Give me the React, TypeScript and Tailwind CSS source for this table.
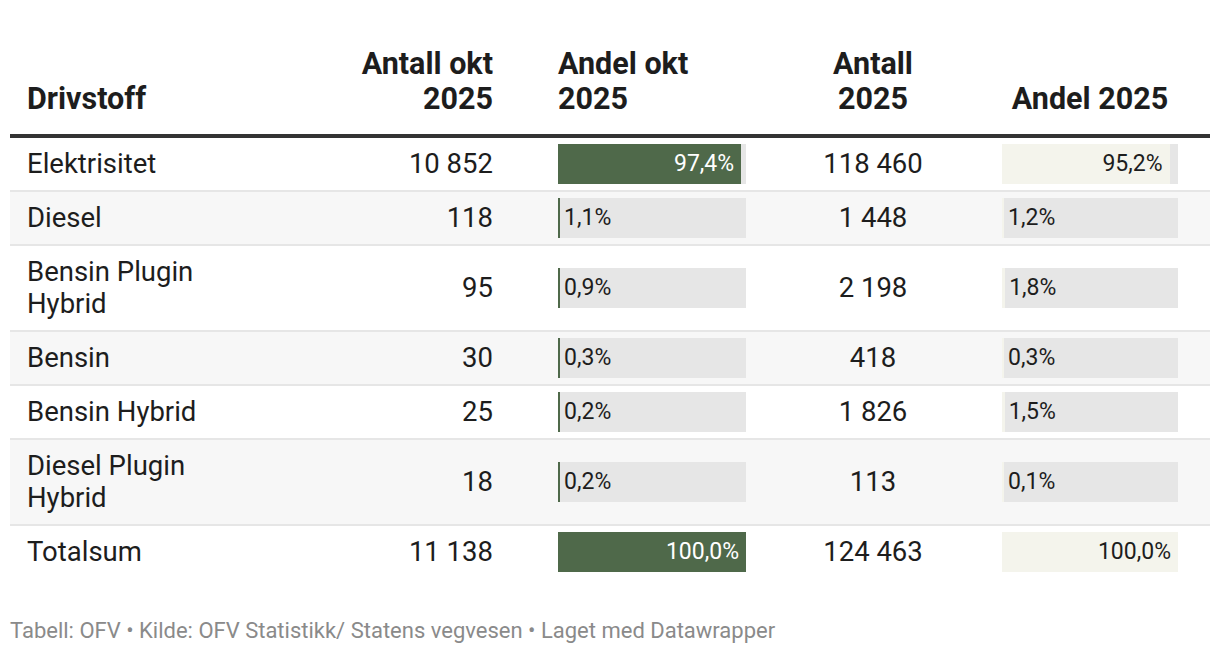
import React from 'react';

type Row = {
  name: string;
  okt: string;
  andelOkt: number;
  antall: string;
  andel: number;
};

const rows: Row[] = [
  { name: 'Elektrisitet', okt: '10 852', andelOkt: 97.4, antall: '118 460', andel: 95.2 },
  { name: 'Diesel', okt: '118', andelOkt: 1.1, antall: '1 448', andel: 1.2 },
  { name: 'Bensin Plugin Hybrid', okt: '95', andelOkt: 0.9, antall: '2 198', andel: 1.8 },
  { name: 'Bensin', okt: '30', andelOkt: 0.3, antall: '418', andel: 0.3 },
  { name: 'Bensin Hybrid', okt: '25', andelOkt: 0.2, antall: '1 826', andel: 1.5 },
  { name: 'Diesel Plugin Hybrid', okt: '18', andelOkt: 0.2, antall: '113', andel: 0.1 },
  { name: 'Totalsum', okt: '11 138', andelOkt: 100, antall: '124 463', andel: 100 },
];

const fmt = (v: number) => v.toFixed(1).replace('.', ',') + '%';

function Bar({ value, width, fill, light }: { value: number; width: number; fill: string; light: boolean }) {
  const px = Math.max(2, (value / 100) * width);
  const inside = value > 50;
  return (
    <div className="flex h-[40px] items-center bg-[#e6e6e6]" style={{ width }}>
      {inside ? (
        <div
          className={`flex h-full shrink-0 items-center justify-end pr-[7px] ${light ? 'text-[#1d1d1d]' : 'text-white'}`}
          style={{ width: px, background: fill }}
        >
          {fmt(value)}
        </div>
      ) : (
        <>
          <div className="h-full shrink-0" style={{ width: px, background: fill }} />
          <span className="ml-[4px] text-[#1d1d1d]">{fmt(value)}</span>
        </>
      )}
    </div>
  );
}

const cols = 'grid grid-cols-[200px_338px_208px_234px_220px]';

export default function App() {
  return (
    <div className="min-h-[654px] bg-white px-[10px] pt-[46px] font-['Roboto',sans-serif] text-[#1d1d1d]">
      <div className="w-[1200px]">
        <div className={`${cols} border-b-4 border-[#333333] text-[30.5px] font-bold leading-[35px]`}>
          <div className="flex items-end pb-[18px] pl-[17px]">Drivstoff</div>
          <div className="flex items-end justify-end pb-[18px] pr-[55px] text-right">
            Antall okt
            <br />
            2025
          </div>
          <div className="flex items-end pb-[18px] pl-[10px]">
            Andel okt
            <br />
            2025
          </div>
          <div className="flex items-end justify-center pb-[18px] text-center">
            Antall
            <br />
            2025
          </div>
          <div className="flex items-end justify-center pb-[18px] pl-[12px] pr-[32px]">Andel 2025</div>
        </div>

        {rows.map((r, i) => (
          <div
            key={r.name}
            className={`${cols} text-[27.5px] leading-[32px] ${i % 2 === 1 ? 'bg-[#f7f7f7]' : 'bg-white'} ${
              i < rows.length - 1 ? 'border-b-2 border-[#e6e6e6]' : ''
            }`}
          >
            <div className="flex items-center py-[10px] pl-[17px]">{r.name}</div>
            <div className="flex items-center justify-end py-[10px] pr-[55px]">{r.okt}</div>
            <div className="flex items-center pl-[10px] text-[23px]">
              <Bar value={r.andelOkt} width={188} fill="#4f694a" light={false} />
            </div>
            <div className="flex items-center justify-center py-[10px]">{r.antall}</div>
            <div className="flex items-center pl-[12px] text-[23px]">
              <Bar value={r.andel} width={176} fill="#f4f4ec" light={true} />
            </div>
          </div>
        ))}
      </div>

      <div className="mt-[41px] text-[22px] leading-[24px] text-[#8a8a8a]">
        Tabell: OFV • Kilde: OFV Statistikk/ Statens vegvesen • Laget med Datawrapper
      </div>
    </div>
  );
}
